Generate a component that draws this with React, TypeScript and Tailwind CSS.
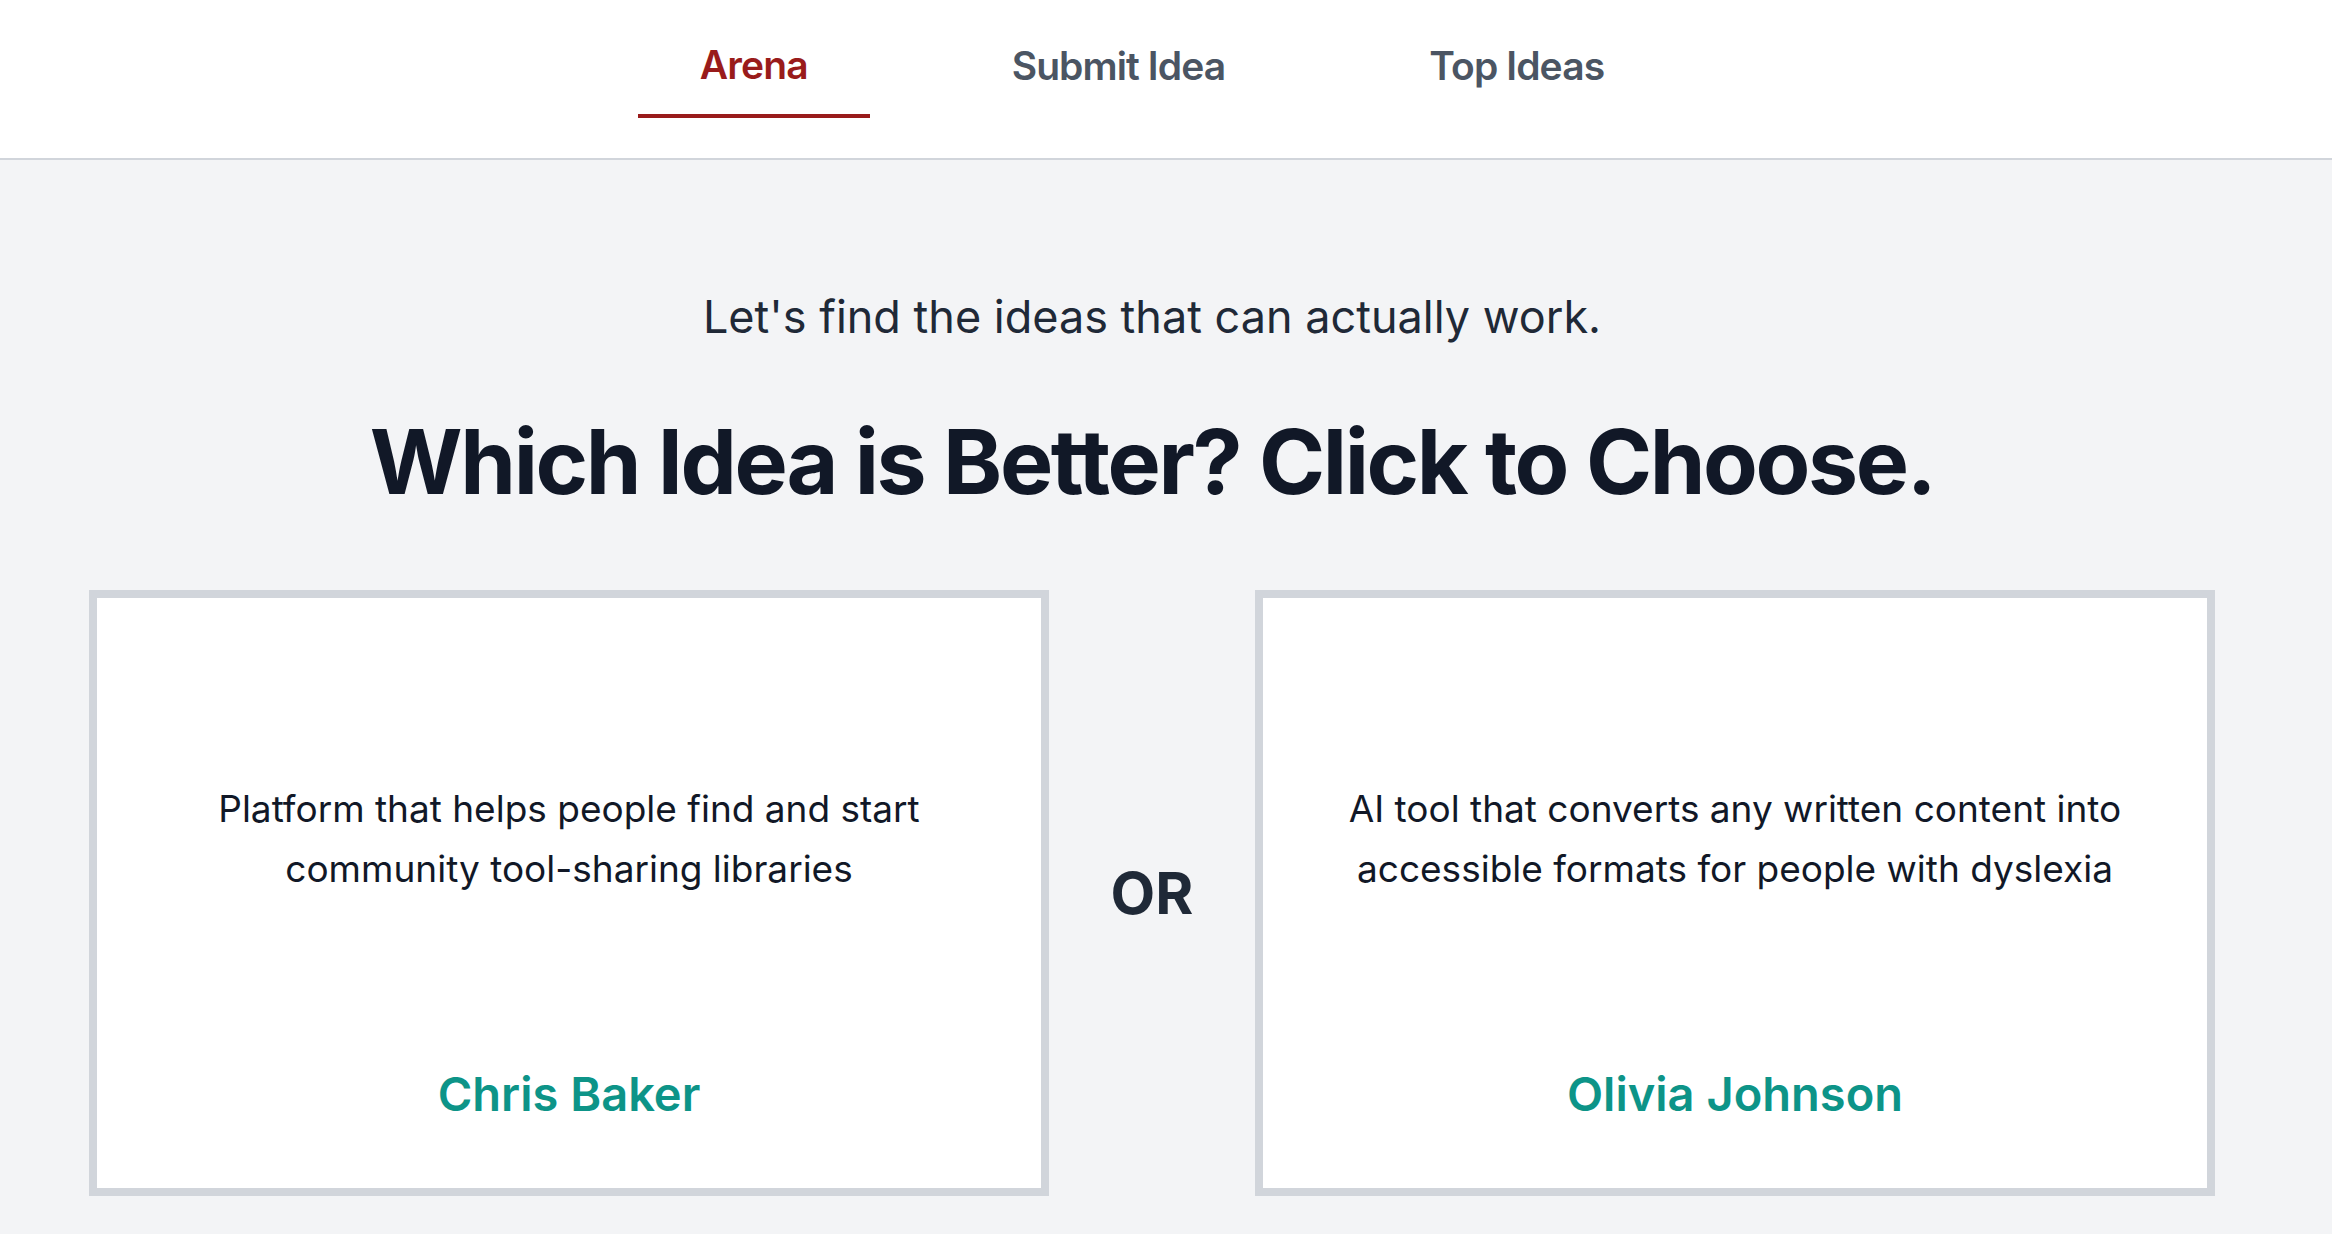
import React from "react";

const ideas = [
  {
    text: "Platform that helps people find and start community tool-sharing libraries",
    author: "Chris Baker",
  },
  {
    text: "AI tool that converts any written content into accessible formats for people with dyslexia",
    author: "Olivia Johnson",
  },
];

function Card({ text, author }: { text: string; author: string }) {
  return (
    <button className="flex-1 h-[606px] bg-white border-[8px] border-[#d1d5db] flex flex-col items-center text-center pt-[181px] pb-[64px] px-[64px] cursor-pointer">
      <p className="text-[37px] leading-[60px] text-[#111827] font-normal">{text}</p>
      <div className="flex-1" />
      <div className="text-[47px] leading-[60px] font-semibold text-[#0d9488]">{author}</div>
    </button>
  );
}

export default function App() {
  const tabs = ["Arena", "Submit Idea", "Top Ideas"];
  return (
    <div
      className="min-h-screen bg-[#f3f4f6]"
      style={{ fontFamily: "Inter, 'Noto Sans', sans-serif" }}
    >
      <nav className="bg-white border-b-2 border-[#d1d5db] h-[160px]">
        <div className="w-[2304px] flex justify-center gap-[80px]">
          {tabs.map((t, i) => (
            <div
              key={t}
              className={
                i === 0
                  ? "px-[62px] pt-[41px] pb-[25px] border-b-4 border-[#991b1b] text-[#991b1b] text-[39px] leading-[48px] tracking-[-0.9px] font-semibold"
                  : "px-[62px] pt-[42px] pb-[24px] border-b-4 border-transparent text-[#4b5563] text-[39px] leading-[48px] tracking-[-0.9px] font-semibold"
              }
            >
              {t}
            </div>
          ))}
        </div>
      </nav>
      <main className="w-[2304px] flex flex-col items-center">
        <p className="mt-[130px] text-[45px] leading-[54px] text-[#1f2937]">
          Let's find the ideas that can actually work.
        </p>
        <h1 className="mt-[73px] text-[89.5px] leading-[90px] font-bold tracking-[-2.4px] text-[#111827]">
          Which Idea is Better? Click to Choose.
        </h1>
        <div className="mt-[83px] w-full px-[89px] flex items-center">
          <Card text={ideas[0].text} author={ideas[0].author} />
          <div className="w-[206px] flex justify-center text-[58px] font-bold text-[#1f2937]">
            OR
          </div>
          <Card text={ideas[1].text} author={ideas[1].author} />
        </div>
      </main>
    </div>
  );
}
